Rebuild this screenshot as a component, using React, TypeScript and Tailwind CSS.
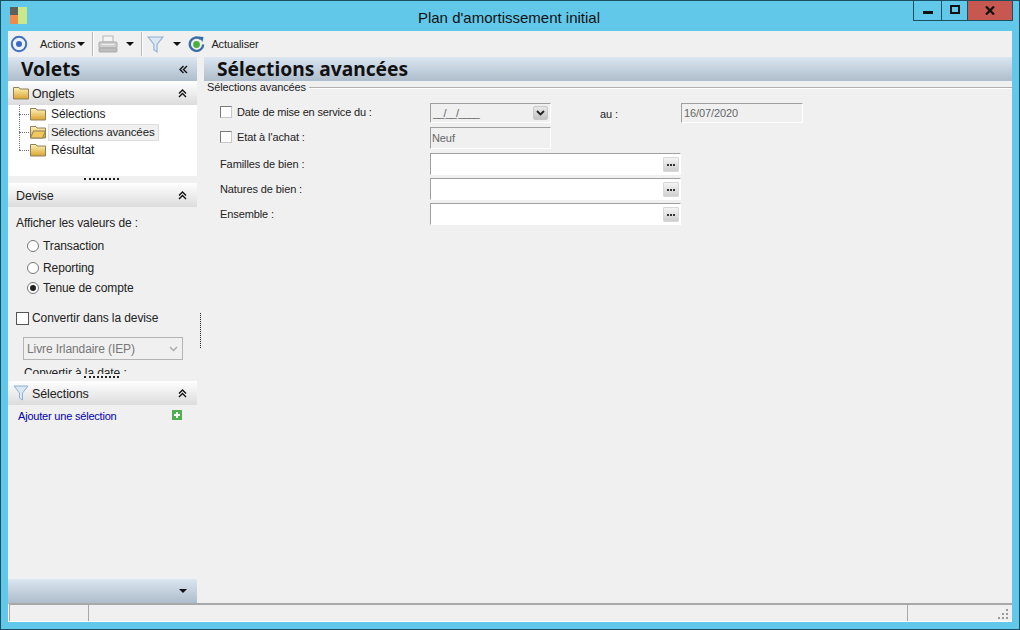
import React from "react";

const Chevrons = ({ left = false }: { left?: boolean }) => (
  <svg width="9" height="9" viewBox="0 0 9 9" className={left ? "-rotate-90" : ""}>
    <path d="M1 4.5 L4.5 1 L8 4.5 M1 8 L4.5 4.5 L8 8" fill="none" stroke="#111" strokeWidth="1.4" />
  </svg>
);

const Caret = () => (
  <svg width="8" height="4" viewBox="0 0 8 4"><path d="M0 0H8L4 4Z" fill="#111" /></svg>
);

const Folder = ({ open = false }: { open?: boolean }) => (
  <svg width="16" height="14" viewBox="0 0 16 14">
    <defs>
      <linearGradient id="fg" x1="0" y1="0" x2="0" y2="1">
        <stop offset="0" stopColor="#fff3b8" />
        <stop offset="1" stopColor="#d9a32e" />
      </linearGradient>
    </defs>
    <path d="M0.5 3V1.5H6L7 3H15.5V13H0.5Z" fill="url(#fg)" stroke="#8c8060" />
    {open && <path d="M0.5 13L3.5 6H15.5L12.5 13Z" fill="#f2c75c" stroke="#8c8060" />}
  </svg>
);

const Funnel = ({ size = 16 }: { size?: number }) => (
  <svg width={size} height={size} viewBox="0 0 16 16">
    <path d="M1 1H15L9.5 8V15L6.5 13V8Z" fill="#dbe7f4" stroke="#8fb0d0" strokeWidth="1" />
  </svg>
);

const Target = () => (
  <svg width="18" height="18" viewBox="0 0 18 18">
    <circle cx="9" cy="9" r="7.2" fill="#eef3fb" stroke="#3f6fc0" strokeWidth="2" />
    <circle cx="9" cy="9" r="3" fill="#3b6cc4" />
  </svg>
);

const Refresh = () => (
  <svg width="17" height="17" viewBox="0 0 17 17">
    <path d="M13 3.2A6.7 6.7 0 1 0 15.2 8.5" fill="none" stroke="#3a6da8" strokeWidth="2.4" />
    <path d="M10.5 0.5L15.5 1L14.5 6Z" fill="#3a6da8" />
    <circle cx="8.5" cy="8.5" r="3.4" fill="#4caf3c" />
  </svg>
);

const Printer = () => (
  <svg width="20" height="18" viewBox="0 0 20 18">
    <rect x="5" y="1" width="10" height="6" fill="#f4f4f4" stroke="#b4b4b4" />
    <rect x="1" y="7" width="18" height="6" rx="1" fill="#d0d0d0" stroke="#aaa" />
    <rect x="1" y="13" width="18" height="4" rx="1" fill="#bdbdbd" stroke="#aaa" />
    <rect x="4" y="9" width="12" height="1" fill="#eee" />
  </svg>
);

const Sep = () => <div className="w-[2px] h-[24px] bg-[#b8b8b8] border-r border-white" />;

const PanelHeader = ({ icon, title }: { icon?: React.ReactNode; title: string }) => (
  <div className="h-[24px] shrink-0 flex items-center bg-gradient-to-b from-white to-[#dcdcdc]">
    {icon ? <div className="w-[16px] ml-[5px] mr-[3px] flex justify-center">{icon}</div> : <div className="w-[8px]" />}
    <span className="flex-1 text-[12.5px] text-[#222] pt-[3px]">{title}</span>
    <div className="mr-[10px] flex"><Chevrons /></div>
  </div>
);

const Splitter = () => (
  <div className="h-[7px] shrink-0 flex justify-center items-start">
    <div className="w-[35px] h-[2px] mt-[2px] mr-[3px] border-t-2 border-dotted border-[#222]" />
  </div>
);

const Sunken = ({ className = "", children }: { className?: string; children?: React.ReactNode }) => (
  <div className={"border-t border-l border-t-[#a0a0a0] border-l-[#a0a0a0] border-r border-b border-r-white border-b-white flex items-center " + className}>
    {children}
  </div>
);

const Dots = () => (
  <div className="w-[16px] h-[15px] mr-[1px] ml-auto rounded-[1px] bg-gradient-to-b from-[#f4f4f4] to-[#cfcfcf] border border-[#d8d8d8] flex items-center justify-center gap-[1px] pt-[2px]">
    <i className="block w-[2px] h-[2px] bg-[#333]" />
    <i className="block w-[2px] h-[2px] bg-[#333]" />
    <i className="block w-[2px] h-[2px] bg-[#333]" />
  </div>
);

const Check = () => (
  <div className="w-[12px] h-[12px] -mt-[2px] bg-white border border-t-[#7a7a7a] border-l-[#7a7a7a] border-r-[#c8c8c8] border-b-[#c8c8c8] shrink-0" />
);

const Radio = ({ on = false, label }: { on?: boolean; label: string }) => (
  <div className="flex items-center gap-[4px] h-[20px] pl-[19px]">
    <div className="w-[12px] h-[12px] rounded-full border border-[#777] bg-white flex items-center justify-center">
      {on && <div className="w-[6px] h-[6px] rounded-full bg-[#222]" />}
    </div>
    <span>{label}</span>
  </div>
);

const TreeItem = ({ open = false, selected = false, label }: { open?: boolean; selected?: boolean; label: string }) => (
  <div className="h-[18px] flex items-center">
    <div className="w-[10px] border-t border-dotted border-[#777]" />
    <div className="flex w-[16px] shrink-0 ml-[1px]"><Folder open={open} /></div>
    <span className={"ml-[2px] h-[17px] pr-[3px] " + (selected ? "bg-[#f0f0f0] border border-[#dedede] pl-[2px] text-[11.5px] leading-[14px]" : "pl-[3px] text-[12px] leading-[16px]")}>{label}</span>
  </div>
);

const FieldRow = ({ label, className = "" }: { label: string; className?: string }) => (
  <div className={"flex items-center h-[22px] " + className}>
    <span className="w-[210px] shrink-0">{label}</span>
    <Sunken className="w-[251px] h-[22px] bg-white"><Dots /></Sunken>
  </div>
);

export default function App() {
  return (
    <div className="w-[1020px] h-[630px] overflow-hidden bg-[#62c8ea] border border-[#1d4f63] flex flex-col text-[12px] text-[#222]" style={{ fontFamily: '"Liberation Sans", Arial, sans-serif', letterSpacing: "-0.1px" }}>
      {/* Title bar */}
      <div className="h-[30px] shrink-0 flex">
        <div className="ml-[9px] mt-[6px] w-[17px] h-[17px] flex">
          <div className="w-[8px] flex flex-col">
            <div className="h-[8px] bg-[#5f5f5f]" />
            <div className="h-[9px] bg-[#f08a4b]" />
          </div>
          <div className="w-[9px] bg-[#c8e88a]" />
        </div>
        <div className="flex-1 text-center text-[15px] text-[#111] pt-[6px] pl-[78px] tracking-normal">Plan d'amortissement initial</div>
        <div className="flex h-[21px] mr-[6px] -mt-px border border-t-0 border-[#1d4f63] w-[100px]">
          <div className="w-[28px] border-r border-[#1d4f63] flex items-center justify-center">
            <div className="w-[10px] h-[3px] bg-[#111] mt-[5px]" />
          </div>
          <div className="w-[26px] border-r border-[#1d4f63] flex items-center justify-center">
            <div className="w-[10px] h-[9px] border-2 border-[#111] -mt-[1px]" />
          </div>
          <div className="flex-1 bg-[#c75850] flex items-center justify-center">
            <svg width="10" height="9" viewBox="0 0 10 9"><path d="M1 0.5L9 8.5M9 0.5L1 8.5" stroke="#111" strokeWidth="2.2" /></svg>
          </div>
        </div>
      </div>

      {/* Client */}
      <div className="flex-1 min-h-0 mx-[7px] mb-[7px] bg-[#f0f0f0] flex flex-col">
        {/* Toolbar */}
        <div className="h-[26px] shrink-0 flex items-center pl-[2px] text-[11px]">
          <Target />
          <span className="ml-[12px] mr-[2px]">Actions</span>
          <Caret />
          <div className="ml-[7px] mr-[4px]"><Sep /></div>
          <Printer />
          <div className="ml-[8px]"><Caret /></div>
          <div className="ml-[7px] mr-[4px]"><Sep /></div>
          <Funnel size={17} />
          <div className="ml-[9px]"><Caret /></div>
          <div className="ml-[7px]"><Refresh /></div>
          <span className="ml-[6px]">Actualiser</span>
        </div>

        <div className="flex-1 min-h-0 flex">
          {/* Left panel */}
          <div className="w-[189px] shrink-0 flex flex-col">
            <div className="h-[24px] shrink-0 flex items-center bg-gradient-to-b from-[#dbe6f1] to-[#aebdcb]">
              <span className="flex-1 pl-[13px] text-[19.2px] font-bold text-[#111] tracking-normal" style={{ fontFamily: '"Noto Sans", sans-serif' }}>Volets</span>
              <div className="mr-[9px] flex"><Chevrons left /></div>
            </div>
            <PanelHeader icon={<Folder />} title="Onglets" />
            <div className="h-[71px] shrink-0 bg-white pl-[11px] relative">
              <div className="absolute left-[11px] top-0 h-[45px] border-l border-dotted border-[#777]" />
              <TreeItem label="Sélections" />
              <TreeItem open selected label="Sélections avancées" />
              <TreeItem label="Résultat" />
            </div>
            <Splitter />
            <PanelHeader title="Devise" />
            <div className="h-[167px] shrink-0 overflow-hidden pt-[8px]">
              <div className="pl-[8px] h-[16px] leading-[16px]">Afficher les valeurs de :</div>
              <div className="mt-[5px]"><Radio label="Transaction" /></div>
              <div className="mt-[2px]"><Radio label="Reporting" /></div>
              <Radio on label="Tenue de compte" />
              <div className="flex items-center gap-[3px] pl-[8px] mt-[12px] h-[16px]">
                <div className="w-[13px] h-[13px] bg-white border border-[#555]" />
                <span>Convertir dans la devise</span>
              </div>
              <div className="ml-[15px] mt-[11px] w-[160px] h-[23px] border border-[#b4b4b4] bg-[#f0f0f0] flex items-center pl-[3px] text-[#777]">
                <span className="flex-1">Livre Irlandaire (IEP)</span>
                <svg width="9" height="6" viewBox="0 0 9 6" className="mr-[4px]"><path d="M1 1L4.5 4.5L8 1" fill="none" stroke="#aaa" strokeWidth="1.4" /></svg>
              </div>
              <div className="pl-[16px] mt-[4px]">Convertir à la date :</div>
            </div>
            <Splitter />
            <PanelHeader icon={<Funnel />} title="Sélections" />
            <div className="flex-1 min-h-0 flex items-start pt-[3px]">
              <span className="flex-1 pl-[10px] text-[#0000b0] text-[11px] tracking-[-0.2px]">Ajouter une sélection</span>
              <div className="w-[10px] h-[10px] mr-[15px] mt-[2px] bg-[#4fae4e] flex items-center justify-center relative">
                <i className="absolute w-[6px] h-[2px] bg-white" />
                <i className="absolute w-[2px] h-[6px] bg-white" />
              </div>
            </div>
            <div className="h-[24px] shrink-0 flex items-center justify-end bg-gradient-to-b from-[#dbe6f1] to-[#aebdcb]">
              <div className="mr-[10px] flex"><Caret /></div>
            </div>
          </div>

          {/* Vertical splitter */}
          <div className="w-[7px] shrink-0 flex justify-center items-center">
            <div className="w-px h-[35px] border-l border-dotted border-[#222]" />
          </div>

          {/* Main */}
          <div className="flex-1 min-w-0 flex flex-col text-[11px]">
            <div className="h-[24px] shrink-0 flex items-center bg-gradient-to-b from-[#dbe6f1] to-[#aebdcb] pl-[13px] text-[19.2px] font-bold text-[#111] tracking-normal" style={{ fontFamily: '"Noto Sans", sans-serif' }}>
              Sélections avancées
            </div>
            <div className="flex items-center pl-[3px] h-[13px]">
              <span>Sélections avancées</span>
              <div className="flex-1 ml-[3px] h-[2px] bg-[#b0b0b0] border-b border-white mt-[1px]" />
            </div>
            <div className="pl-[16px]">
              <div className="flex items-center h-[20px] mt-[9px]">
                <div className="w-[210px] shrink-0 flex items-center gap-[5px]"><Check /><span className="-mt-[2px] tracking-[-0.17px]">Date de mise en service du :</span></div>
                <Sunken className="w-[121px] h-[20px] pl-[2px] text-[#666]">
                  <span className="tracking-[-0.9px]">__/__/____</span>
                  <div className="ml-auto mr-[2px] w-[15px] h-[14px] rounded-[2px] bg-gradient-to-b from-[#e8e8e8] to-[#c4c4c4] border border-[#c8c8c8] flex items-center justify-center">
                    <svg width="9" height="6" viewBox="0 0 9 6"><path d="M1 1L4.5 4.5L8 1" fill="none" stroke="#222" strokeWidth="1.8" /></svg>
                  </div>
                </Sunken>
                <span className="ml-[49px] w-[81px] shrink-0 mt-[2px]">au :</span>
                <Sunken className="w-[122px] h-[20px] pl-[2px] text-[#666] !items-start"><span className="mt-[1px]">16/07/2020</span></Sunken>
              </div>
              <div className="flex items-center h-[22px] mt-[4px]">
                <div className="w-[210px] shrink-0 flex items-center gap-[5px]"><Check /><span className="-mt-[2px]">Etat à l'achat :</span></div>
                <Sunken className="w-[121px] h-[22px] pl-[1px] text-[#666]"><span>Neuf</span></Sunken>
              </div>
              <FieldRow label="Familles de bien :" className="mt-[4px]" />
              <FieldRow label="Natures de bien :" className="mt-[3px]" />
              <FieldRow label="Ensemble :" className="mt-[3px]" />
            </div>
          </div>
        </div>

        {/* Status bar */}
        <div className="h-[19px] shrink-0 flex border-t-2 border-t-[#a8a8a8] border-b border-b-white border-l border-l-white bg-[#f0f0f0]">
          <div className="w-[80px] border-l border-l-[#a8a8a8] border-r border-r-[#a8a8a8]" />
          <div className="w-[819px] border-r border-r-[#a8a8a8]" />
          <div className="flex-1 flex items-end justify-end pr-[3px] pb-[1px]">
            <svg width="11" height="11" viewBox="0 0 11 11" fill="#9a9a9a">
              <rect x="8" y="0" width="2" height="2" /><rect x="4" y="4" width="2" height="2" /><rect x="8" y="4" width="2" height="2" />
              <rect x="0" y="8" width="2" height="2" /><rect x="4" y="8" width="2" height="2" /><rect x="8" y="8" width="2" height="2" />
            </svg>
          </div>
        </div>
      </div>
    </div>
  );
}
